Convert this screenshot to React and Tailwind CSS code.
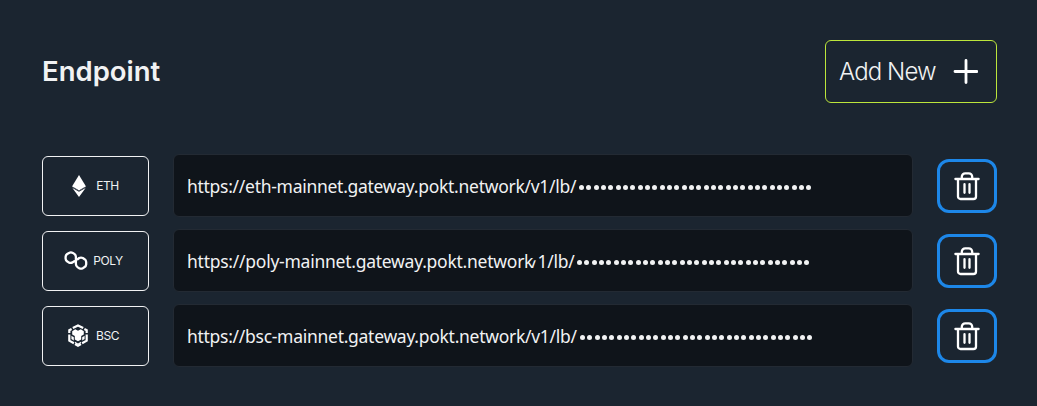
const dots = Array.from({ length: 32 });

function EthIcon() {
  return (
    <svg className="h-[22px] w-[14px] shrink-0" viewBox="0 0 14 22" fill="#fff">
      <path d="M7 0 0 11.6l7 3.9 7-3.9z" />
      <path d="M0.4 13 7 22l6.6-9L7 16.7z" />
      <path d="M0.3 11.9 7 15.8l6.7-3.9" fill="none" stroke="#59616b" strokeWidth="0.8" />
    </svg>
  );
}

function PolyIcon() {
  return (
    <svg className="h-[20px] w-[24px] shrink-0" viewBox="0 0 24 20" fill="none" stroke="#fff" strokeWidth="2.3" strokeLinejoin="round" strokeLinecap="round">
      <path d="M10.3 10.2 8.6 11.4A4.9 4.9 0 0 1 5 11.6L3 10.3A4 4 0 0 1 1.6 7.6V5.8A4 4 0 0 1 3.2 3L5 1.9A4 4 0 0 1 8.8 1.9L10.3 2.9A4 4 0 0 1 11.9 6.2V12.9A4 4 0 0 0 13.5 16.1L15.2 17.2A4 4 0 0 0 18.8 17.2L20.6 16.1A4 4 0 0 0 22.2 13.3V11A4 4 0 0 0 20.6 8.2L18.8 7A4 4 0 0 0 15.2 7L13.6 8.3" />
    </svg>
  );
}

function BscIcon() {
  return (
    <svg className="h-[23px] w-[20px] shrink-0" viewBox="0 0 20 23" fill="none" stroke="#fff" strokeWidth="2.2">
      <path d="M4.8 4 10 1.4 15.2 4M1.3 9V6.2L3.6 5M16.4 5l2.3 1.2V9M1.3 10.4v6.3l4.6 2.6M18.7 10.4v6.3l-4.6 2.6M7 20.1l3 1.6 3-1.6" />
      <path fill="#fff" stroke="none" d="M4.2 7.2 7.2 5.3 10 6.8l2.8-1.5 3 1.9v3.2L13.2 12v3.4L10 17.2l-3.2-1.8V12l-2.6-1.6zM3.4 11.8l2.4 1.5v3.2L3.4 15zM16.6 11.8l-2.4 1.5v3.2l2.4-1.5zM7 17.8l3 1.7 3-1.7v1.4l-3 1.7-3-1.7z" />
    </svg>
  );
}

function TrashIcon() {
  return (
    <svg className="h-[30px] w-[28px]" viewBox="0 0 28 30" fill="none" stroke="#fff" strokeWidth="2.3" strokeLinecap="round" strokeLinejoin="round">
      <path d="M2.4 8h23.2M5 8v17.4a2.6 2.6 0 0 0 2.6 2.6h12.8a2.6 2.6 0 0 0 2.6-2.6V8M8.8 7.6V5.8a3.4 3.4 0 0 1 3.4-3.4h3.6a3.4 3.4 0 0 1 3.4 3.4v1.8M11.5 13.2v8.6M16.5 13.2v8.6" />
    </svg>
  );
}

const rows = [
  { name: "ETH", Icon: EthIcon, host: "https://eth-mainnet.gateway.pokt.network", path: "v1/lb/", chip: "gap-[10px]", text: "w-[392px] tracking-[-0.28px]" },
  { name: "POLY", Icon: PolyIcon, host: "https://poly-mainnet.gateway.pokt.network", path: "1/lb/", chip: "gap-[5px] pr-[4px]", slash: "inline-block -ml-[2px] [clip-path:inset(45%_0_0_0)]", text: "w-[390px] tracking-[-0.25px]" },
  { name: "BSC", Icon: BscIcon, host: "https://bsc-mainnet.gateway.pokt.network", path: "v1/lb/", chip: "gap-[8px] pr-[4px]", text: "w-[393px] tracking-[-0.28px]" },
];

export default function App() {
  return (
    <main className="h-[406px] w-[1037px] bg-[#1b2530] pt-10 pr-10 pl-[42px] font-['Inter',sans-serif] text-[#f1f2f3]">
      <header className="flex h-[63px] items-center justify-between">
        <h1 className="text-[27.5px] font-semibold tracking-[0px]">Endpoint</h1>
        <button className="flex h-[63px] w-[172px] items-center justify-between rounded-[6px] border border-[#bde63b] pr-[18px] pl-[13px] text-[24px] font-[350] tracking-[-0.9px]">
          <span>Add New</span>
          <svg className="size-[25px]" viewBox="0 0 25 25" stroke="#fff" strokeWidth="2.8" strokeLinecap="round">
            <path d="M13 1.5v22M2 12.5h22" />
          </svg>
        </button>
      </header>
      <section className="mt-[51px] flex flex-col gap-3">
        {rows.map(({ name, Icon, host, path, slash, chip, text }) => (
          <div key={name} className="flex h-[63px] items-center">
            <div className={`flex h-[60px] w-[107px] shrink-0 items-center justify-center rounded-[6px] border border-[#f1f2f3] text-[12px] tracking-[-0.45px] ${chip}`}>
              <Icon />
              <span>{name}</span>
            </div>
            <div className="ml-6 flex h-[63px] w-[740px] shrink-0 items-center rounded-[6px] border border-[#232a33] bg-[#0f141a] pt-[2px] pl-[13px] font-['Noto_Sans',sans-serif] text-[17.5px]">
              <span className={`shrink-0 whitespace-nowrap ${text}`}>
                {host}<span className={slash}>/</span>{path}
              </span>
              <span className="flex gap-[2.33px] pt-[2px]">
                {dots.map((_, i) => <i key={i} className="size-[5px] rounded-full bg-[#f1f2f3]" />)}
              </span>
            </div>
            <button className="ml-6 flex h-[54px] w-[60px] shrink-0 items-center justify-center rounded-[12px] border-[3px] border-[#1d87e8]" aria-label="Delete endpoint">
              <TrashIcon />
            </button>
          </div>
        ))}
      </section>
    </main>
  );
}
